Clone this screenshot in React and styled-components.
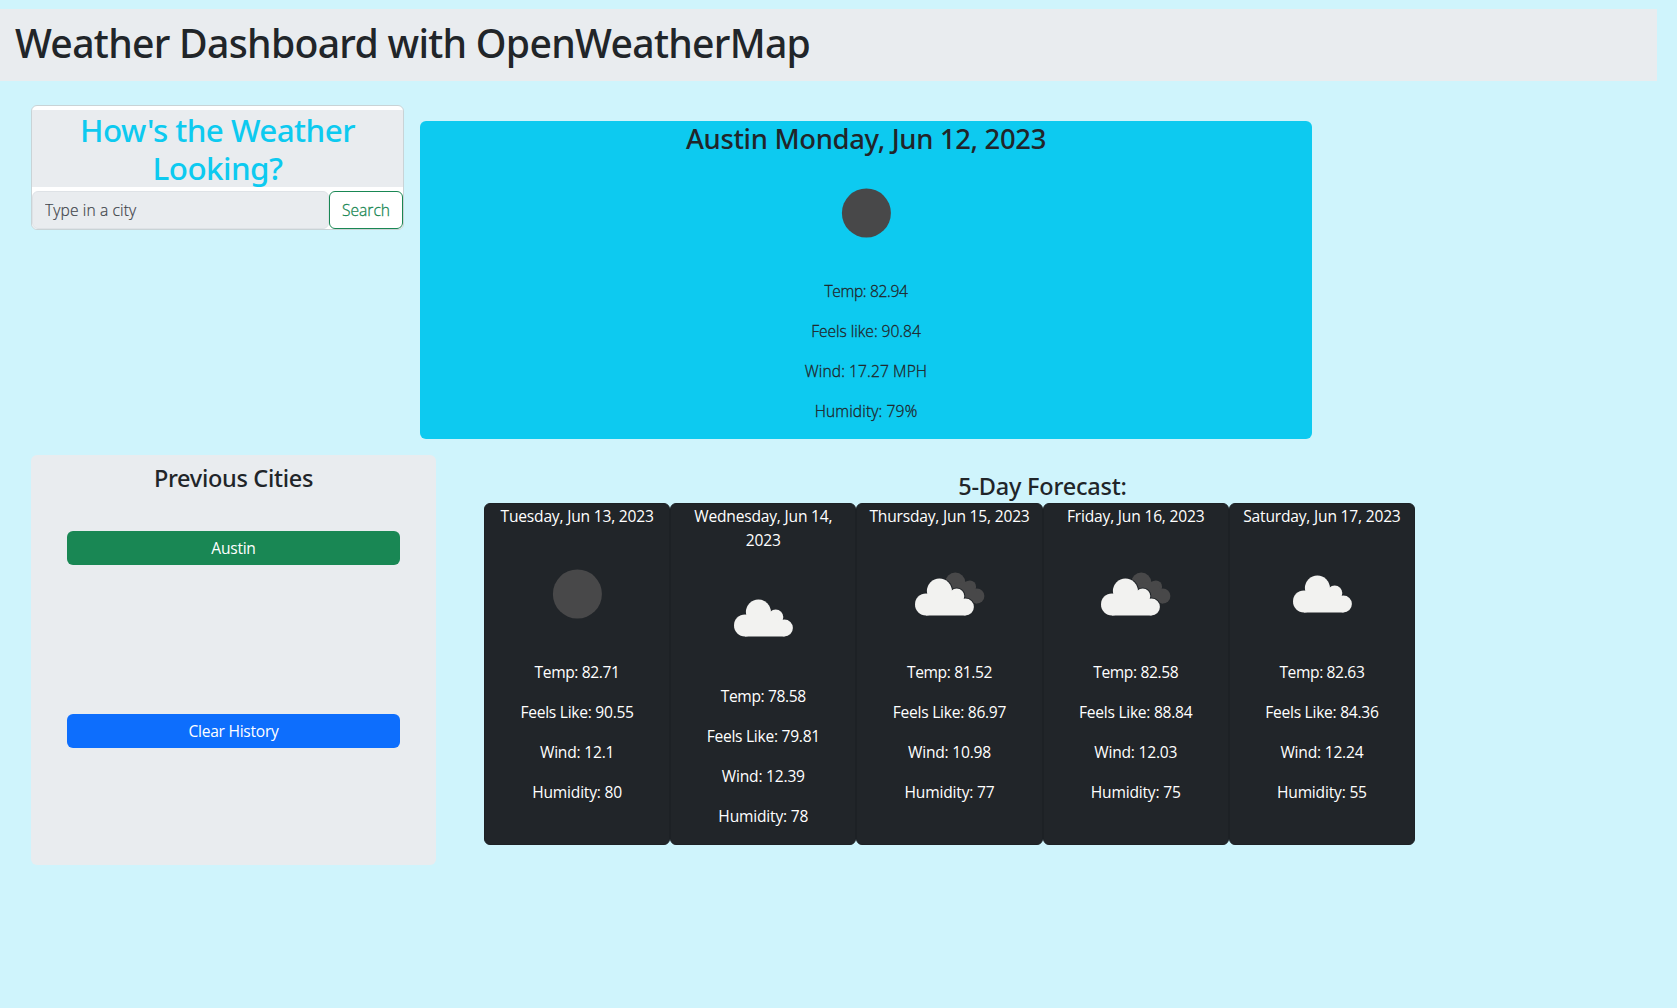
import React from "react";
import styled, { createGlobalStyle } from "styled-components";

const GlobalStyle = createGlobalStyle`
  *, *::before, *::after { box-sizing: border-box; }
  body {
    margin: 0;
    background: #cff4fc;
    color: #212529;
    font-family: "Open Sans", "Noto Sans", sans-serif;
    font-size: 15.6px;
    line-height: 24px;
  }
  h1, h2, h3, h4, p { margin: 0; }
`;

const Page = styled.div`
  min-height: 1008px;
  padding-top: 9px;
`;

const TopBar = styled.header`
  width: 1657px;
  height: 72px;
  padding: 10px 15px;
  background: #e9ecef;
`;

const Title = styled.h1`
  font: 500 39.2px/48px "Noto Sans", sans-serif;
  letter-spacing: -0.72px;
`;

const Row = styled.div`
  display: flex;
  align-items: flex-start;
  padding-left: 31px;
  gap: ${(p) => p.$gap}px;
  margin-top: ${(p) => p.$top}px;
`;

const SearchCard = styled.section`
  width: 373px;
  height: 125px;
  overflow: hidden;
  padding-top: 4px;
  border: 1px solid #c9d3d6;
  border-radius: 6px;
  background: #fff;
`;

const SearchHeading = styled.h2`
  height: 77px;
  padding-top: 1px;
  margin-bottom: 4px;
  background: #e9ecef;
  color: #0dcaf0;
  font: 500 31.4px/38.4px "Noto Sans", sans-serif;
  letter-spacing: -0.56px;
  text-align: center;
`;

const SearchForm = styled.form`
  display: flex;
  height: 38px;
`;

const CityInput = styled.input`
  flex: 1;
  min-width: 0;
  padding: 0 12px;
  border: 1px solid #dee2e6;
  border-radius: 6px;
  background: #e9ecef;
  font: 300 15.6px "Open Sans", sans-serif;
  letter-spacing: 0.12px;
  &::placeholder {
    color: #3f444a;
    opacity: 1;
    -webkit-text-stroke: 0.2px #3f444a;
  }
`;

const SearchButton = styled.button`
  width: 74px;
  padding: 0;
  border: 1px solid #198754;
  border-radius: 6px;
  background: #fff;
  color: #198754;
  font: 300 15.6px "Open Sans", sans-serif;
  -webkit-text-stroke: 0.3px #198754;
`;

const CurrentCard = styled.section`
  width: 892px;
  height: 318px;
  margin-top: 16px;
  border-radius: 6px;
  background: #0dcaf0;
  font-weight: 300;
  text-align: center;
`;

const CurrentTitle = styled.h3`
  padding-top: 1px;
  margin-bottom: 7px;
  font: 500 27.4px/34px "Noto Sans", sans-serif;
  letter-spacing: -0.3px;
`;

const Stat = styled.p`
  margin-bottom: 16px;
  letter-spacing: ${(p) => p.$tracking}px;
  -webkit-text-stroke: ${(p) => (p.$light ? "0.3px #212529" : "0")};
`;

const Icon = styled.svg`
  display: block;
  width: 100px;
  height: 100px;
  margin: ${(p) => p.$top || 0}px auto 16px;
`;

const History = styled.aside`
  width: 405px;
  height: 410px;
  padding: 9px 36px 0;
  border-radius: 6px;
  background: #e9ecef;
`;

const Subtitle = styled.h4`
  font: 500 23.5px/29px "Noto Sans", sans-serif;
  letter-spacing: ${(p) => p.$tracking}px;
  text-align: center;
`;

const CityButton = styled.button`
  display: block;
  width: 333px;
  height: 34px;
  margin-top: ${(p) => p.$top}px;
  padding: 0;
  border: 0;
  border-radius: 6px;
  background: ${(p) => p.$color};
  color: #fff;
  font: 400 15.6px/34px "Open Sans", sans-serif;
  letter-spacing: -0.26px;
`;

const Forecast = styled.section`
  width: 1117px;
  padding-top: 17px;
`;

const Days = styled.div`
  display: flex;
  width: 931px;
  height: 342px;
  margin-top: 2px;
`;

const DayCard = styled.article`
  flex: 1;
  padding: 0 9px;
  border: 1px solid #1d2125;
  border-radius: 6px;
  background: #212529;
  color: #fff;
  text-align: center;
`;

const DayName = styled.p`
  letter-spacing: -0.2px;
`;

const cloudShape = (
  <>
    <circle cx="32" cy="57.4" r="11" />
    <circle cx="45.4" cy="44" r="12.5" />
    <circle cx="62.7" cy="49" r="7.6" />
    <circle cx="71.4" cy="60" r="8.5" />
    <path d="M32 68.5V50l13-6 17 5 9.4 9v10.5z" />
  </>
);

function WeatherIcon({ kind, top }) {
  return (
    <Icon viewBox="0 0 100 100" $top={top} aria-hidden="true">
      {kind === "clear" && <circle cx="50.4" cy="50" r="24.5" fill="#484849" />}
      {kind === "clouds" && <g fill="#f2f2f0">{cloudShape}</g>}
      {kind === "broken" && (
        <>
          <g fill="#484849">
            <circle cx="55.3" cy="38.5" r="10" />
            <circle cx="69.9" cy="42.7" r="6.2" />
            <circle cx="76.9" cy="52" r="7.5" />
            <path d="M50 40l20-3 7 12v10.5L60 56z" />
          </g>
          <g transform="translate(-6 3)" fill="#212529" stroke="#212529" strokeWidth="2">{cloudShape}</g>
          <g transform="translate(-6 3)" fill="#f2f2f0">{cloudShape}</g>
        </>
      )}
    </Icon>
  );
}

const current = [
  ["Temp: 82.94", -0.34],
  ["Feels like: 90.84", -0.03],
  ["Wind: 17.27 MPH", 0.1],
  ["Humidity: 79%", 0.13],
];

const days = [
  { date: "Tuesday, Jun 13, 2023", icon: "clear", temp: "82.71", feels: "90.55", wind: "12.1", humidity: 80 },
  { date: "Wednesday, Jun 14, 2023", icon: "clouds", temp: "78.58", feels: "79.81", wind: "12.39", humidity: 78 },
  { date: "Thursday, Jun 15, 2023", icon: "broken", temp: "81.52", feels: "86.97", wind: "10.98", humidity: 77 },
  { date: "Friday, Jun 16, 2023", icon: "broken", temp: "82.58", feels: "88.84", wind: "12.03", humidity: 75 },
  { date: "Saturday, Jun 17, 2023", icon: "clouds", temp: "82.63", feels: "84.36", wind: "12.24", humidity: 55 },
];

export default function App() {
  return (
    <Page>
      <GlobalStyle />
      <TopBar>
        <Title>Weather Dashboard with OpenWeatherMap</Title>
      </TopBar>
      <Row $top={24} $gap={16}>
        <SearchCard>
          <SearchHeading>
            How's the Weather
            <br />
            Looking?
          </SearchHeading>
          <SearchForm>
            <CityInput placeholder="Type in a city" />
            <SearchButton type="button">Search</SearchButton>
          </SearchForm>
        </SearchCard>
        <CurrentCard>
          <CurrentTitle>Austin Monday, Jun 12, 2023</CurrentTitle>
          <WeatherIcon kind="clear" />
          {current.map(([text, tracking]) => (
            <Stat key={text} $tracking={tracking} $light>{text}</Stat>
          ))}
        </CurrentCard>
      </Row>
      <Row $top={16} $gap={48}>
        <History>
          <Subtitle $tracking={-0.3}>Previous Cities</Subtitle>
          <CityButton $top={38} $color="#198754">Austin</CityButton>
          <CityButton $top={149} $color="#0d6efd">Clear History</CityButton>
        </History>
        <Forecast>
          <Subtitle $tracking={-0.2}>5-Day Forecast:</Subtitle>
          <Days>
            {days.map((d) => (
              <DayCard key={d.date}>
                <DayName>{d.date}</DayName>
                <WeatherIcon kind={d.icon} top={16} />
                <Stat $tracking={-0.38}>Temp: {d.temp}</Stat>
                <Stat $tracking={-0.27}>Feels Like: {d.feels}</Stat>
                <Stat $tracking={-0.22}>Wind: {d.wind}</Stat>
                <Stat $tracking={-0.2}>Humidity: {d.humidity}</Stat>
              </DayCard>
            ))}
          </Days>
        </Forecast>
      </Row>
    </Page>
  );
}
